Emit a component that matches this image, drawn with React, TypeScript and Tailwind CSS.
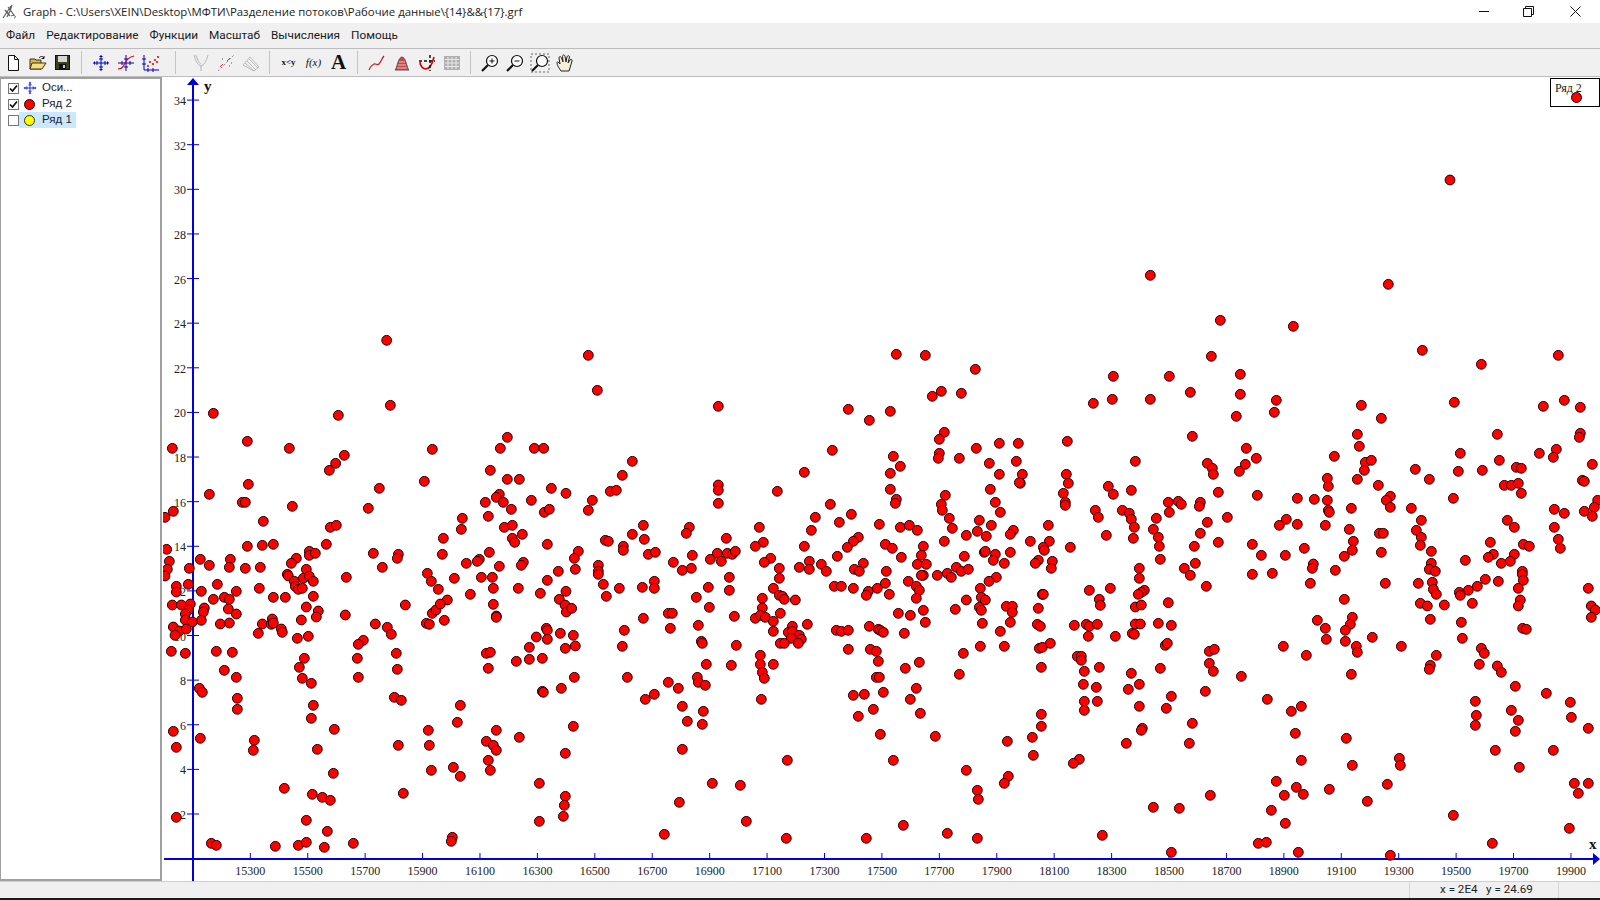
// Graph window with a scatter plot
type Tile = { ox: number; oy: number; pts: number[] };

// points read from the picture, 3x tile coordinates
const tiles: Tile[] = [
  { ox: 160, oy: 330, pts: [680,31,1285,76,1312,181,691,226,160,250,535,256,262,334,1042,322,37,355,388,355,817,358,1021,355,1123,355,1151,355,1417,394,553,376,527,400,508,421,991,421,1387,436,793,454,1042,448,1078,448,265,463,658,475,1174,475,148,493,1218,490,1351,484,1369,481,247,517,256,517,1018,493,1009,502,976,517,1030,517,1114,511,1297,511,40,544,397,529,625,535,1054,538,1153,547,1168,538,1285,541,985,559,15,562,310,574,907,565,511,592,529,586,904,598,1033,592,1057,586,1087,613,1417,613,1057,625,1064,637,850,625,1336,631,1345,634,20,658,262,649,307,646,340,643,499,643,1162,643,1390,649,1390,661,448,664,448,676,466,670,640,670,847,673,715,673,712,685,988,667,1255,664,1243,685,121,688,211,688,28,694,409,685,394,700,958,688,952,694,919,700,1090,697,1084,706,1315,706,148,706,208,712,256,715,301,712,88,715,22,718,667,712,1018,709,1246,718,439,718,1315,724,1315,733,802,730,382,733,385,738,15,738,1195,724,430,745,448,739,964,742,997,742,559,742,883,745,403,754,460,754,814,754,1162,751,172,763,85,763,49,769,406,769,1330,763,415,778,427,775,298,775,835,778,1000,775,1075,775,1378,775,124,784,49,786,229,784,931,793,1141,790,1218,784,193,802,340,802,376,802,460,799,1198,808,1339,799,160,808,208,808,862,810] },
  { ox: 160, oy: 600, pts: [37,15,64,15,91,12,133,24,205,27,439,21,475,33,736,15,1000,13,1215,15,1219,36,1235,25,130,36,85,30,76,42,229,42,76,60,124,61,97,66,337,57,208,69,181,72,307,72,334,73,340,69,424,60,469,51,556,45,646,72,682,82,694,103,799,70,808,73,853,61,817,40,828,30,841,12,1009,48,1009,52,40,81,58,93,79,87,45,106,364,87,367,97,295,100,412,115,445,109,610,121,595,133,1129,111,1159,85,1162,91,1162,118,1201,100,1240,106,1393,91,1246,138,1216,145,1387,139,1108,142,34,154,76,160,169,154,217,157,709,160,979,160,991,157,592,175,433,175,1069,184,1108,178,1147,175,418,202,193,211,712,208,985,205,229,232,427,235,595,232,1243,232,1402,232,454,250,118,265,127,277,1147,274,1150,277,1204,265,703,292,724,301,232,295,460,316,901,316,232,328,454,355,892,367,40,394,523,388,805,391,1009,391,1240,379,121,415,283,421,979,424,1078,412,49,442,280,451,472,448,715,436,808,436,1000,436,1009,451,1216,460,985,481,520,520,880,502,814,511,991,511,901,529,373,565,1138,550,457,583,487,592,511,601,730,580,1216,589,1213,616,49,652,1210,649,439,661,1138,664,502,694,154,730,169,736,346,739,415,736,439,727,493,742,580,730,877,712,874,724] },
  { ox: 640, oy: 330, pts: [769,73,856,76,1006,118,1420,139,904,184,877,199,964,190,1360,220,1417,208,235,229,625,238,688,271,751,244,913,307,898,328,1009,355,1078,340,1135,340,1282,334,577,361,760,379,898,370,895,385,958,385,1048,400,1129,394,781,409,493,427,751,430,1078,433,1147,433,1279,433,235,465,235,481,412,484,751,478,1141,460,1138,458,1285,460,1051,478,1405,469,1420,493,1270,490,916,496,235,520,571,523,769,508,766,520,904,523,1066,517,1276,517,1276,526,1366,541,907,541,634,553,526,562,1081,547,1375,562,598,577,928,565,10,586,148,592,358,592,718,583,781,592,808,586,832,601,1018,571,1054,586,1225,586,139,610,514,601,937,595,1012,604,1120,601,1111,613,979,616,1039,619,1399,616,13,628,259,625,655,622,640,634,370,637,913,634,1171,634,736,643,1228,634,346,649,493,649,622,652,757,655,850,649,1210,652,1291,652,1213,661,25,673,46,667,232,670,262,670,277,673,286,664,157,676,844,676,1033,667,1036,664,1066,673,1111,667,211,688,592,679,784,682,973,679,392,685,100,697,244,694,373,697,508,694,670,700,1060,691,1195,691,1186,700,1237,694,544,703,832,703,859,703,1093,700,154,715,127,721,418,715,478,712,508,718,643,718,658,724,739,724,559,724,949,712,1234,715,922,730,964,724,985,718,850,736,844,736,892,736,934,742,1069,742,268,742,418,745,43,754,805,754,736,760,1047,754,583,769,604,769,712,775,829,769,7,772,43,775,205,772,268,781,400,775,640,775,1021,775,838,781,1348,781,1411,775,685,784,748,793,679,796,1207,793,1210,793,169,802,367,805,418,796,427,799,433,808,466,810,829,805,979,810,1024,802,1378,808,1036,810] },
  { ox: 640, oy: 600, pts: [208,22,10,55,85,40,97,40,91,85,175,76,283,49,367,24,346,55,361,46,376,52,421,40,400,64,400,94,502,73,457,79,445,97,457,94,478,106,484,118,454,115,475,130,421,130,433,130,589,91,604,94,625,91,688,79,715,88,721,91,730,97,775,40,811,46,850,31,856,67,793,100,946,28,1018,22,1024,31,1099,19,1117,19,1117,37,1195,25,1111,67,1027,70,1081,94,1192,73,1201,79,1303,76,1339,73,1348,79,1372,73,1345,109,1426,109,1381,16,184,124,187,130,289,136,625,148,691,148,709,154,970,160,1021,139,1093,139,1198,145,1207,142,1231,130,1312,169,1324,169,1324,181,361,166,199,193,274,196,361,193,400,193,715,184,838,187,796,205,1204,202,1378,202,1333,214,367,217,373,235,172,232,175,247,196,256,85,247,115,265,958,223,709,232,718,232,1330,253,1369,262,829,265,43,283,16,298,640,286,673,283,730,277,364,298,811,298,1333,304,1372,304,127,319,190,334,700,328,1333,331,841,340,655,349,1204,343,142,364,187,373,1204,379,721,403,886,409,1177,412,1102,424,127,448,442,481,760,481,1180,466,1318,478,1300,490,979,511,1105,529,217,550,301,556,1093,550,1012,571,1015,598,118,607,319,664,790,676,73,703,922,700,439,715,679,715,1012,715,1387,706] },
  { ox: 1120, oy: 260, pts: [990,-240,91,46,805,73,301,181,520,199,907,271,274,289,1315,286,1084,313,148,349,361,343,211,397,361,403,91,418,469,421,724,436,1003,427,1270,439,1333,421,1381,442,349,469,463,457,784,475,712,523,217,529,1132,523,1381,520,1378,532,718,559,379,565,1309,568,1021,580,1258,580,643,589,1300,592,409,595,46,604,736,607,754,601,262,610,376,613,1138,601,1417,613,277,625,358,634,733,631,886,628,1015,634,1087,631,1189,622,1204,625,280,643,622,655,712,658,928,658,1387,661,1393,664,625,679,775,676,1153,676,1174,676,1195,670,34,691,295,697,1204,700,412,706,811,709,532,715,583,718,622,721,799,721,1000,715,145,727,175,724,184,733,241,727,238,739,1433,721,1423,742,694,745,811,742,874,745,1303,748,1393,754,7,751,28,760,148,757,625,751,628,757,1333,760,1417,769,109,775,34,778,322,772,499,778,904,781,1162,781,262,787,478,796,532,793,616,796,1183,802,43,802,100,808,688,808,889,811,1303,802,241,820,778,820,790,820,115,832,904,832,40,835,1315,838,700,844,295,847,397,853,1111,847,118,859,223,859,901,856,553,865,1210,853,1228,859,1321,865,697,871,784,877,934,874,424,886,496,886,673,889,1183,883,1120,883,1105,892,121,898,1036,901,1144,910,1171,904,226,910,580,912,934,910,58,925,193,925,577,925,928,928,946,934,646,931,1207,934,397,943,457,940,211,946,1207,943,58,955,1210,961,1096,958,1135,964,571,970,796,970,895,970,937,967,259,979,1072,979,1045,991,1195,985,1405,985,940,988,73,991,64,997,55,1003,1018,997,1021,1006,949,1003,145,1028,673,1018,901,1030,1057,1030,1201,1020] },
  { ox: 1120, oy: 600, pts: [46,21,64,15,922,18,973,15,1195,18,1414,18,1426,30,1414,52,697,52,592,61,931,58,46,72,61,72,115,70,154,76,1024,67,691,73,616,85,676,91,1208,85,1219,88,37,100,43,103,757,112,619,118,676,124,1027,115,136,136,142,130,490,139,709,139,844,139,1084,145,1093,160,268,154,283,148,559,166,712,157,949,166,268,190,1078,193,1132,198,931,196,928,208,121,205,34,220,280,214,1144,217,694,223,364,229,58,253,1186,259,25,268,256,274,1279,280,154,289,442,298,1066,304,1351,307,58,319,544,319,139,325,514,334,1174,331,1069,346,1354,352,217,370,1195,361,1066,376,67,385,64,391,1405,385,526,400,679,415,1186,394,19,430,208,430,1126,451,1300,451,838,475,841,496,544,481,697,496,1198,502,469,544,529,562,802,553,1363,550,1405,550,628,568,271,586,493,586,550,583,1375,580,742,604,100,622,178,625,454,631,1000,646,496,670,1348,685,415,730,439,727,1117,730,154,757,535,757,811,766] },
];

const dots: [number, number][] = tiles.flatMap((t) => {
  const out: [number, number][] = [];
  for (let i = 0; i < t.pts.length; i += 2) out.push([t.ox + t.pts[i] / 3, t.oy + t.pts[i + 1] / 3]);
  return out;
});

const xLabels = Array.from({ length: 24 }, (_, i) => ({ label: 15300 + i * 200, x: 250.3 + i * 57.42 }));
const yLabels = Array.from({ length: 17 }, (_, i) => ({ label: 2 + i * 2, y: 814 - i * 44.62 }));

function Plot() {
  const blue = "#0000dc";
  return (
    <svg viewBox="163 77 1437 804" className="block w-[1437px] h-[804px]">
      <line x1="164" y1="859" x2="1595" y2="859" stroke={blue} strokeWidth="2" />
      <line x1="193" y1="881" x2="193" y2="83" stroke={blue} strokeWidth="2" />
      <polygon points="193,78 187,85 199,85" fill={blue} />
      <polygon points="1600,859 1593,853 1593,865" fill={blue} />
      {xLabels.map((t) => (
        <g key={t.label}>
          <line x1={t.x} y1="853" x2={t.x} y2="859" stroke={blue} />
          <text x={t.x} y="875" textAnchor="middle" fontSize="12" fill="#222" fontFamily="'Liberation Serif', serif">
            {t.label}
          </text>
        </g>
      ))}
      {yLabels.map((t) => (
        <g key={t.label}>
          <line x1="187" y1={t.y} x2="199" y2={t.y} stroke={blue} />
          <text x="186" y={t.y + 5} textAnchor="end" fontSize="12" fill="#222" fontFamily="'Liberation Serif', serif">
            {t.label}
          </text>
        </g>
      ))}
      <text x="204" y="91" fontSize="15" fontWeight="bold" fill="#111" fontFamily="'Liberation Serif', serif">y</text>
      <text x="1589" y="849" fontSize="15" fontWeight="bold" fill="#111" fontFamily="'Liberation Serif', serif">x</text>
      {dots.map(([x, y], i) => (
        <circle key={i} cx={x} cy={y} r="4.9" fill="#ff0000" stroke="#1a0000" strokeWidth="1" />
      ))}
    </svg>
  );
}

function AxesIcon({ size = 18 }: { size?: number }) {
  return (
    <svg width={size} height={size} viewBox="0 0 18 18" fill="none" stroke="#0000c8">
      <path d="M1 9h16M9 1v16M5 7v4M13 7v4M7 5h4M7 13h4M2.500 7.500v3M15.500 7.500v3M7.500 2.500h3M7.500 15.500h3" />
    </svg>
  );
}

function Magnifier({ sign, box }: { sign?: "+" | "-"; box?: boolean }) {
  return (
    <svg width="20" height="20" viewBox="0 0 20 20" fill="none">
      {box && <rect x="1" y="1" width="18" height="18" stroke="#666" strokeDasharray="2 2" />}
      <circle cx="12" cy="8" r="5.5" stroke="#111" strokeWidth="1.2" fill="#fff" />
      <path d="M8 12l-6 6" stroke="#111" strokeWidth="2.2" />
      {sign && <path d="M9.500 8h5" stroke="#111" />}
      {sign === "+" && <path d="M12 5.500v5" stroke="#111" />}
    </svg>
  );
}

function Sep({ w = "w-[13px]" }: { w?: string }) {
  return (
    <div className={`${w} h-full flex justify-center items-center`}>
      <div className="w-px h-[23px] bg-[#c4c4c4]" />
    </div>
  );
}

function Btn({ children }: { children: React.ReactNode }) {
  return <div className="w-[25px] h-full flex items-center justify-center shrink-0">{children}</div>;
}

function Toolbar() {
  return (
    <div className="h-[27px] bg-[#f0f0f0] border-b border-[#bcbcbc] box-content flex items-center">
      <Btn>
        <svg width="14" height="16" viewBox="0 0 14 16" fill="#fff" stroke="#111">
          <path d="M2.500.5h6l4 4v11h-10zM8.500.5v4h4" />
        </svg>
      </Btn>
      <Btn>
        <svg width="18" height="16" viewBox="0 0 18 16">
          <path d="M1 4h5l1 1h5v9H1z" fill="#d8b64c" stroke="#3b3318" />
          <path d="M3 8h14l-4 6H1z" fill="#f3de86" stroke="#3b3318" />
          <path d="M10 3c1.500-2 3.500-2 5 0M15 1v2.500h-2.500" fill="none" stroke="#111" />
        </svg>
      </Btn>
      <Btn>
        <svg width="15" height="15" viewBox="0 0 15 15">
          <rect x=".5" y=".5" width="14" height="14" fill="#3d3d20" stroke="#111" />
          <rect x="3" y="1" width="9" height="6" fill="#d7d7d0" />
          <rect x="4" y="9" width="7" height="5" fill="#111" />
          <rect x="8" y="10" width="2" height="3" fill="#c8c8c8" />
        </svg>
      </Btn>
      <Sep />
      <Btn>
        <AxesIcon />
      </Btn>
      <Btn>
        <svg width="18" height="18" viewBox="0 0 18 18" fill="none">
          <path d="M1 9h16M9 1v16M5 7v4M13 7v4M7 5h4M7 13h4" stroke="#0000c8" />
          <path d="M1 15c4 0 5-2 7-6s4-6 9-7" stroke="#d00000" strokeWidth="1.2" />
        </svg>
      </Btn>
      <Btn>
        <svg width="18" height="18" viewBox="0 0 18 18" fill="none">
          <path d="M2 1v15h15M0 5h4M0 10h4M6 14v4M11 14v4" stroke="#0000c8" />
          <path d="M5 12h2M7 8h2M10 10h2M12 6h2M15 3h2M14 8h2" stroke="#d00000" strokeWidth="1.5" />
        </svg>
      </Btn>
      <Sep w="w-[25px]" />
      <Btn>
        <svg width="18" height="18" viewBox="0 0 18 18" fill="none" stroke="#b4b4b4">
          <path d="M2 1c2 7 4 10 7 11 3-1 5-4 7-11M9 12v5M4 1c2 6 3 8 5 9" />
        </svg>
      </Btn>
      <Btn>
        <svg width="18" height="18" viewBox="0 0 18 18" fill="none">
          <path d="M1 17L17 1" stroke="#888" strokeDasharray="2 2" />
          <path d="M3 13l3-3M10 7l3-3" stroke="#e03030" />
          <path d="M5 5h1M12 12h1M14 9h1" stroke="#555" />
        </svg>
      </Btn>
      <Btn>
        <svg width="18" height="18" viewBox="0 0 18 18" fill="none" stroke="#b0b0b0" strokeWidth=".8">
          <path d="M1 11l7-8 9 10-5 4zM3 9l9 8M5 7l9 9M7 5l9 9" />
        </svg>
      </Btn>
      <Sep />
      <Btn>
        <span className="font-['Liberation_Serif',serif] font-bold text-[9px] text-[#111] leading-none">x&lt;y</span>
      </Btn>
      <Btn>
        <span className="font-['Liberation_Serif',serif] italic text-[11px] text-[#111] leading-none">f(x)</span>
      </Btn>
      <Btn>
        <span className="font-['Liberation_Serif',serif] font-bold text-[21px] text-[#111] leading-none">A</span>
      </Btn>
      <Sep />
      <Btn>
        <svg width="18" height="18" viewBox="0 0 18 18" fill="none" stroke="#c81818" strokeWidth="1.2">
          <path d="M1 16c1-3 3-5 5-6s3 2 5 0 3-6 5-8" />
        </svg>
      </Btn>
      <Btn>
        <svg width="16" height="16" viewBox="0 0 16 16">
          <path d="M1 15C3 14 4 2 8 2s5 12 7 13z" fill="#c84848" stroke="#555" />
          <path d="M3 13h10M4 10h8M5 7h6" stroke="#f0c0c0" />
        </svg>
      </Btn>
      <Btn>
        <svg width="18" height="18" viewBox="0 0 18 18" fill="none">
          <path d="M2 8c0 4 3 7 6 7s6-4 8-12" stroke="#d00000" strokeWidth="1.6" />
          <path d="M1 7h16M12 1v16" stroke="#111" strokeWidth="1.500" strokeDasharray="3 2" />
        </svg>
      </Btn>
      <Btn>
        <svg width="16" height="14" viewBox="0 0 16 14">
          <rect width="16" height="14" fill="#b0b0b0" />
          <path d="M1 3.500h14M1 7h14M1 10.500h14M4 1v12M8 1v12M12 1v12" stroke="#e8e8e8" />
        </svg>
      </Btn>
      <Sep />
      <Btn>
        <Magnifier sign="+" />
      </Btn>
      <Btn>
        <Magnifier sign="-" />
      </Btn>
      <Btn>
        <Magnifier box />
      </Btn>
      <Btn>
        <svg width="17" height="18" viewBox="0 0 17 18" fill="#f7efd8" stroke="#222">
          <path d="M5 17C3 14 1 11 1 9s2-1 3 1L3 4c0-2 2-2 2.500 0L7 8 6.500 2.500c0-2 2.500-2 2.500 0L10 8l1-5c.5-2 2.500-1.500 2.500 0L12 9l2-3c1-1.500 2.500-.5 2 1l-3 10z" />
        </svg>
      </Btn>
    </div>
  );
}

function TreeRow({ checked, icon, label, selected }: { checked: boolean; icon: React.ReactNode; label: string; selected?: boolean }) {
  return (
    <div className="h-4 flex items-center">
      <div className="w-[11px] h-[11px] ml-[7px] border border-[#777] bg-white flex items-center justify-center">
        {checked && (
          <svg width="9" height="9" viewBox="0 0 9 9" fill="none" stroke="#111" strokeWidth="1.700">
            <path d="M1 4.500l2.500 2.500L8 1.500" />
          </svg>
        )}
      </div>
      <div className={`flex items-center h-4 pr-[4px] ${selected ? "bg-[#cce8ff]" : ""}`}>
        <div className="w-[21px] flex justify-center">{icon}</div>
        <span className="ml-[2px] text-[11.5px] text-[#222] leading-none">{label}</span>
      </div>
    </div>
  );
}

export default function App() {
  return (
    <div className="w-[1600px] h-[900px] overflow-hidden flex flex-col bg-white font-['Liberation_Sans',sans-serif]">
      {/* Title bar */}
      <div className="h-[23px] bg-white flex items-center relative">
        <svg width="16" height="16" viewBox="0 0 16 16" fill="none" className="ml-[2px]">
          <path d="M1 14L9 2M3 6l5 6M6 3l6 8M10 1c-1 4-2 7-5 12" stroke="#5c5c5c" strokeWidth="1.200" />
          <path d="M9 12c1-1 3-1 4 0s0 2-1 2" stroke="#2e7d32" />
        </svg>
        <span className="ml-[5px] text-[11.4px] text-[#222] font-['Open_Sans',sans-serif] leading-none">
          Graph - C:\Users\XEIN\Desktop\МФТИ\Разделение потоков\Рабочие данные\{"{14}"}&amp;&amp;{"{17}"}.grf
        </span>
        <div className="ml-auto flex items-center h-full pr-[2px]">
          <div className="w-[45px] flex justify-center">
            <div className="w-[10px] h-px bg-[#111]" />
          </div>
          <div className="w-[45px] flex justify-center mr-[2px]">
            <svg width="11" height="11" viewBox="0 0 11 11" fill="none" stroke="#111">
              <path d="M.5 2.500h8v8h-8zM2.500 2.500v-2h8v8h-2" />
            </svg>
          </div>
          <div className="w-[45px] flex justify-center">
            <svg width="11" height="11" viewBox="0 0 11 11" fill="none" stroke="#111">
              <path d="M.5.500l10 10M10.500.500l-10 10" />
            </svg>
          </div>
        </div>
      </div>

      {/* Menu */}
      <div className="h-[25px] bg-[#f0f0f0] border-b border-[#bcbcbc] box-content flex items-center pl-[6px] gap-[11px] text-[11.8px] text-[#1a1a1a] font-['Roboto',sans-serif]">
        <span>Файл</span>
        <span>Редактирование</span>
        <span>Функции</span>
        <span>Масштаб</span>
        <span>Вычисления</span>
        <span>Помощь</span>
      </div>

      <Toolbar />

      {/* Main area */}
      <div className="h-[804px] flex">
        <div className="w-[162px] mr-px h-full shrink-0 bg-white border-l border-t-2 border-b-2 border-r-2 border-[#a0a0a0] pt-[1px] box-border">
          <TreeRow checked icon={<AxesIcon size={14} />} label="Оси..." />
          <TreeRow
            checked
            icon={<div className="w-[11px] h-[11px] rounded-full bg-[#ff0000] border border-[#300]" />}
            label="Ряд 2"
          />
          <TreeRow
            checked={false}
            selected
            icon={<div className="w-[11px] h-[11px] rounded-full bg-[#ffff00] border border-[#330]" />}
            label="Ряд 1"
          />
        </div>
        <div className="relative">
          <Plot />
          {/* Legend */}
          <div className="absolute right-0 top-px w-[50px] h-[29px] bg-white border border-black">
            <span className="absolute left-1 top-[3px] text-[12px] leading-none text-[#222] font-['Liberation_Serif',serif]">Ряд 2</span>
            <div className="absolute left-[20px] top-[13px] w-[11px] h-[11px] rounded-full bg-[#ff0000] border border-[#300]" />
          </div>
        </div>
      </div>

      {/* Status bar */}
      <div className="h-[17px] bg-[#f0f0f0] border-t border-[#cfcfcf] flex text-[11.6px] text-[#222] font-['Roboto',sans-serif] leading-none">
        <div className="ml-[1409px] w-[150px] border-x border-[#d6d6d6] pl-[30px] flex items-center whitespace-pre">x = 2E4   y = 24.69</div>
      </div>
      <div className="h-[2px] bg-[#1c1c1c]" />
    </div>
  );
}
